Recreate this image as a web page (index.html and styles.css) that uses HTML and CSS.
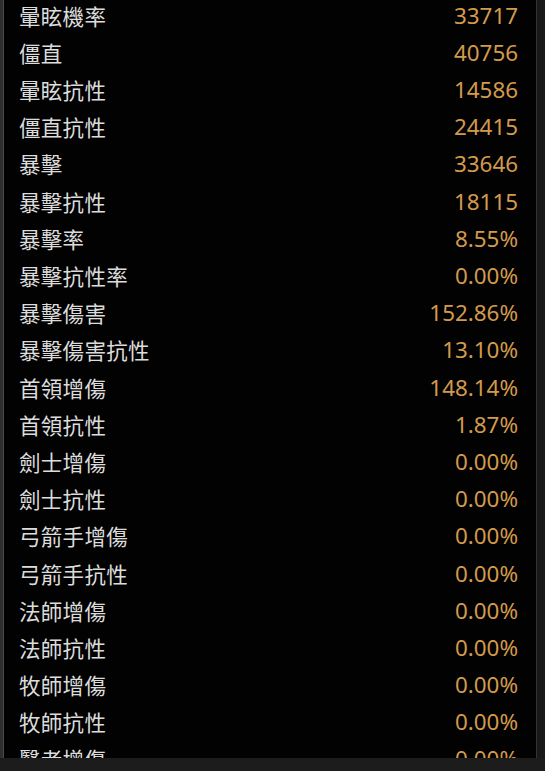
FILE: index.html
```html
<!DOCTYPE html>
<html lang="zh-Hant">
<head>
<meta charset="utf-8">
<link rel="stylesheet" href="styles.css">
</head>
<body>
<div class="panel">
  <ul class="stats">
    <li class="row"><span class="label">暈眩機率</span><span class="value">33717</span></li>
    <li class="row"><span class="label">僵直</span><span class="value">40756</span></li>
    <li class="row"><span class="label">暈眩抗性</span><span class="value">14586</span></li>
    <li class="row"><span class="label">僵直抗性</span><span class="value">24415</span></li>
    <li class="row"><span class="label">暴擊</span><span class="value">33646</span></li>
    <li class="row"><span class="label">暴擊抗性</span><span class="value">18115</span></li>
    <li class="row"><span class="label">暴擊率</span><span class="value">8.55%</span></li>
    <li class="row"><span class="label">暴擊抗性率</span><span class="value">0.00%</span></li>
    <li class="row"><span class="label">暴擊傷害</span><span class="value">152.86%</span></li>
    <li class="row"><span class="label">暴擊傷害抗性</span><span class="value">13.10%</span></li>
    <li class="row"><span class="label">首領增傷</span><span class="value">148.14%</span></li>
    <li class="row"><span class="label">首領抗性</span><span class="value">1.87%</span></li>
    <li class="row"><span class="label">劍士增傷</span><span class="value">0.00%</span></li>
    <li class="row"><span class="label">劍士抗性</span><span class="value">0.00%</span></li>
    <li class="row"><span class="label">弓箭手增傷</span><span class="value">0.00%</span></li>
    <li class="row"><span class="label">弓箭手抗性</span><span class="value">0.00%</span></li>
    <li class="row"><span class="label">法師增傷</span><span class="value">0.00%</span></li>
    <li class="row"><span class="label">法師抗性</span><span class="value">0.00%</span></li>
    <li class="row"><span class="label">牧師增傷</span><span class="value">0.00%</span></li>
    <li class="row"><span class="label">牧師抗性</span><span class="value">0.00%</span></li>
    <li class="row"><span class="label">醫者增傷</span><span class="value">0.00%</span></li>
  </ul>
</div>
<div class="footer"></div>
</body>
</html>
```
FILE: styles.css
```css
html, body {
  margin: 0;
  padding: 0;
  background: #1c1c1c;
}
body {
  width: 545px;
  height: 771px;
  display: flex;
  flex-direction: column;
  overflow: hidden;
}
.panel {
  height: 758px;
  flex: none;
  background: #020202;
  border-left: 3px solid #2e2e2e;
  box-shadow: inset 1px 0 0 #4a4a4a;
  border-right: 8px solid #191919;
  overflow: hidden;
  position: relative;
}
.panel::after {
  content: "";
  position: absolute;
  right: 0;
  top: 0;
  bottom: 0;
  width: 1px;
  background: #343434;
}
.stats {
  list-style: none;
  margin: -3.4px 0 0 0;
  padding: 0 19px 0 16px;
}
.row {
  height: 37.2px;
  display: flex;
  align-items: center;
  justify-content: space-between;
}
.label {
  font-family: "Noto Sans CJK TC", "Noto Sans", sans-serif;
  font-size: 21.5px;
  color: #dcdcdc;
  letter-spacing: 0.3px;
}
.value {
  font-family: "Noto Sans", "Open Sans", sans-serif;
  font-size: 22.4px;
  color: #d49a4c;
}
.footer {
  flex: 1;
  background: #1c1c1c;
}
```
